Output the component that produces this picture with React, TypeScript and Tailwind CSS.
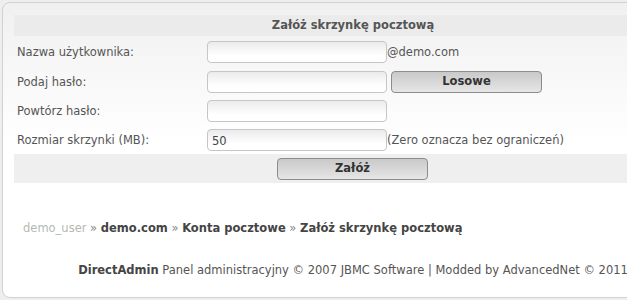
import React from "react"

const font = "font-['Verdana','DejaVu_Sans',sans-serif]"

const inputCls =
  "h-[22px] w-[180px] rounded-[4px] border border-[#c6c6c6] bg-[linear-gradient(to_bottom,#ebebeb,#ffffff_70%)] px-[4px] pt-[2px] text-[11.5px] text-[#444] outline-none"

const btnCls =
  "h-[22px] w-[151px] rounded-[4px] border border-[#8c8c8c] bg-[linear-gradient(to_bottom,#c9c9c9,#e6e6e6)] pt-[1px] text-[11.5px] font-bold text-[#333]"

const Row = ({
  label,
  h,
  children,
}: {
  label: string
  h: string
  children: React.ReactNode
}) => (
  <div className={`flex items-center ${h}`}>
    <div className="w-[193px] pl-[3px] pt-[2px] text-[#555]">{label}</div>
    <div className="flex items-center">{children}</div>
  </div>
)

const App = () => {
  return (
    <div className={`h-[300px] w-[627px] overflow-hidden bg-[#eeeeee] pl-[2px] pt-[2px] text-[11.5px] ${font}`}>
      <div className="h-[296px] w-[702px] rounded-[8px] border border-[#d2d2d2] bg-[linear-gradient(to_bottom,#f0f0f0,#ffffff_140px)] px-[11px] pt-[12px]">
        <div className="flex h-[21px] items-center justify-center bg-[#ebebeb] pt-[1px] font-bold text-[#555]">
          Załóż skrzynkę pocztową
        </div>
        <Row label="Nazwa użytkownika:" h="h-[31px]">
          <input className={inputCls} defaultValue="" />
          <span className="pt-[2px] text-[#555]">@demo.com</span>
        </Row>
        <Row label="Podaj hasło:" h="h-[29px]">
          <input className={inputCls} type="password" defaultValue="" />
          <button className={`${btnCls} ml-[4px]`}>Losowe</button>
        </Row>
        <Row label="Powtórz hasło:" h="h-[29px]">
          <input className={inputCls} type="password" defaultValue="" />
        </Row>
        <Row label="Rozmiar skrzynki (MB):" h="h-[29px]">
          <input className={inputCls} defaultValue="50" />
          <span className="pt-[2px] text-[#555]">(Zero oznacza bez ograniczeń)</span>
        </Row>
        <div className="flex h-[29px] items-center bg-[#efefef] pl-[263px]">
          <button className={btnCls}>Załóż</button>
        </div>

        <div className="mt-[37px] pl-[9px] text-[#444]">
          <span className="text-[#b3bab3]">demo_user</span>
          <span className="text-[#888]"> » </span>
          <b>demo.com</b>
          <span className="text-[#888]"> » </span>
          <b>Konta pocztowe</b>
          <span className="text-[#888]"> » </span>
          <b>Załóż skrzynkę pocztową</b>
        </div>

        <div className="mt-[25px] whitespace-nowrap text-center text-[#555]">
          <b className="text-[#444]">DirectAdmin</b> Panel administracyjny © 2007 JBMC Software | Modded by AdvancedNet © 2011
        </div>
      </div>
    </div>
  )
}

export default App
